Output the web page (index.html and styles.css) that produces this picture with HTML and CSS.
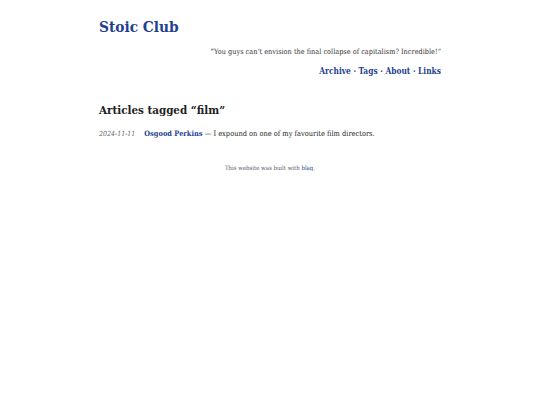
FILE: index.html
```html
<!DOCTYPE html>
<html>
<head>
<meta charset="utf-8">
<link rel="stylesheet" href="styles.css">
</head>
<body>
<div class="page">
  <header class="site-header">
    <h1 class="site-title"><a href="#">Stoic Club</a></h1>
    <p class="tagline">“You guys can’t envision the final collapse of capitalism? Incredible!”</p>
    <nav class="nav"><a href="#">Archive</a> · <a href="#">Tags</a> · <a href="#">About</a> · <a href="#">Links</a></nav>
  </header>
  <main>
    <h2 class="page-title">Articles tagged “film”</h2>
    <ul class="posts">
      <li class="post"><span class="date">2024-11-11</span><span class="entry"><a href="#">Osgood Perkins</a> — I expound on one of my favourite film directors.</span></li>
    </ul>
  </main>
  <footer class="footer">This website was built with <a href="#">blag</a>.</footer>
</div>
</body>
</html>
```
FILE: styles.css
```css
html, body { margin: 0; padding: 0; background: #fff; }
body { font-family: "DejaVu Serif Condensed", "DejaVu Serif", serif; color: #222; }
a { color: #1f3f8f; text-decoration: none; }
.page { width: 342px; margin: 0 auto; padding-top: 16px; }
.site-title { font-size: 15.3px; font-weight: bold; margin: 0; line-height: 22px; }
.tagline { text-align: right; font-size: 7.3px; margin: 9px 0 0; line-height: 10px; color: #333; }
.nav { text-align: right; font-size: 8.3px; font-weight: bold; margin-top: 8px; line-height: 12px; color: #1f3f8f; }
.page-title { font-size: 11.5px; margin: 25px 0 0; line-height: 16px; color: #222; }
.posts { list-style: none; margin: 11px 0 0; padding: 0; font-size: 7.4px; line-height: 10px; }
.post { display: flex; gap: 9px; }
.date { font-style: italic; color: #666; font-size: 7px; }
.entry a { font-weight: bold; }
.footer { text-align: center; font-size: 6px; color: #556; margin-top: 25px; }
.footer a { text-decoration: underline; font-weight: normal; }
```
